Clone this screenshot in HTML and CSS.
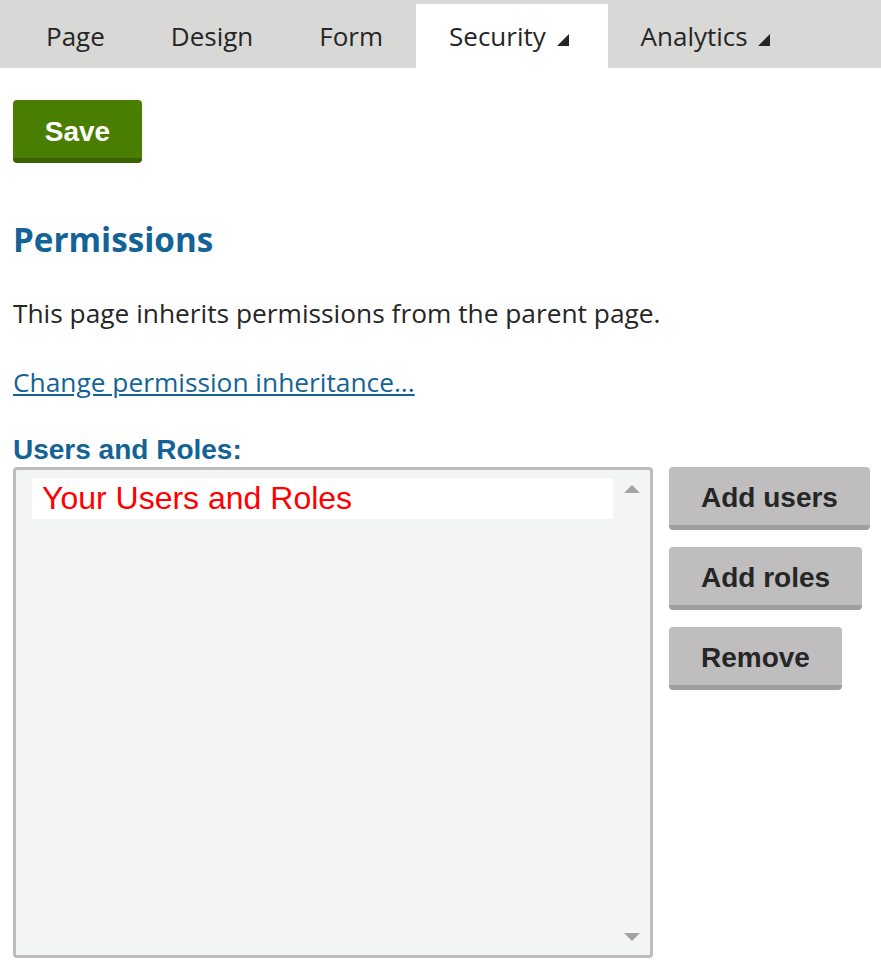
FILE: index.html
```html
<!DOCTYPE html>
<html>
<head>
<meta charset="utf-8">
<link rel="stylesheet" href="styles.css">
</head>
<body>
<nav class="tabs">
  <div class="tab">Page</div>
  <div class="tab">Design</div>
  <div class="tab">Form</div>
  <div class="tab active">Security <span class="caret"></span></div>
  <div class="tab">Analytics <span class="caret"></span></div>
</nav>
<main class="content">
  <button class="btn-save">Save</button>
  <h2 class="heading">Permissions</h2>
  <p class="info">This page inherits permissions from the parent page.</p>
  <a class="link" href="#">Change permission inheritance...</a>
  <div class="label">Users and Roles:</div>
  <div class="users-row">
    <div class="listbox">
      <div class="list-items">
        <div class="list-item">Your Users and Roles</div>
      </div>
      <div class="scroll">
        <span class="arrow up"></span>
        <span class="arrow down"></span>
      </div>
    </div>
    <div class="actions">
      <button class="btn-gray">Add users</button>
      <button class="btn-gray">Add roles</button>
      <button class="btn-gray">Remove</button>
    </div>
  </div>
</main>
</body>
</html>
```

FILE: styles.css
```css
* { box-sizing: border-box; }
body {
  margin: 0;
  font-family: "Open Sans", sans-serif;
  color: #262626;
  background: #fff;
}
.tabs {
  display: flex;
  height: 68px;
  background: #d8d9d6;
  padding: 4px 0 0 13px;
}
.tab {
  display: flex;
  align-items: center;
  padding: 0 33px;
  font-size: 26px;
  color: #262626;
  height: 64px;
  white-space: pre;
}
.tab.active {
  background: #fff;
}
.caret {
  display: inline-block;
  width: 0;
  height: 0;
  border-left: 12px solid transparent;
  border-bottom: 12px solid #262626;
  margin-left: 4px;
  margin-right: 6px;
  margin-top: 8px;
}
.content {
  padding: 32px 13px 0 13px;
}
.btn-save {
  display: block;
  width: 129px;
  height: 63px;
  background: #4a7e00;
  border: none;
  border-bottom: 5px solid #3a6300;
  border-radius: 4px;
  color: #fff;
  font-family: "Liberation Sans", Arial, sans-serif;
  font-weight: bold;
  font-size: 28px;
  padding: 5px 0 0;
}
.heading {
  margin: 57px 0 0 0;
  font-size: 33.2px;
  font-weight: bold;
  color: #146396;
  line-height: 40px;
}
.info {
  margin: 35px 0 0 0;
  font-size: 26.3px;
  line-height: 36px;
}
.link {
  display: inline-block;
  margin-top: 33px;
  font-size: 26.3px;
  line-height: 36px;
  color: #146396;
}
.label {
  margin-top: 34px;
  font-family: "Liberation Sans", Arial, sans-serif;
  font-weight: bold;
  font-size: 28px;
  color: #146396;
  line-height: 32px;
}
.users-row {
  display: flex;
  gap: 16px;
  margin-top: 1px;
}
.listbox {
  width: 640px;
  height: 491px;
  flex-shrink: 0;
  border: 3px solid #bdbcbc;
  border-radius: 4px;
  background: #f3f5f4;
  display: flex;
  padding: 8px 0 8px 16px;
}
.list-items { flex: 1; }
.list-item {
  background: #fff;
  height: 41px;
  padding-left: 10px;
  font-family: "Liberation Sans", Arial, sans-serif;
  font-size: 32px;
  color: #ff0000;
  line-height: 41px;
}
.scroll {
  width: 37px;
  display: flex;
  flex-direction: column;
  justify-content: space-between;
  align-items: center;
  padding: 7px 0 6px;
}
.arrow {
  width: 0;
  height: 0;
  border-left: 8px solid transparent;
  border-right: 8px solid transparent;
}
.arrow.up { border-bottom: 8px solid #a3a3a3; }
.arrow.down { border-top: 8px solid #a3a3a3; }
.actions {
  display: flex;
  flex-direction: column;
  align-items: flex-start;
  gap: 17px;
}
.btn-gray {
  height: 63px;
  padding: 3px 32px 0;
  background: #bfbdbe;
  border: none;
  border-bottom: 5px solid #a09fa0;
  border-radius: 4px;
  font-family: "Liberation Sans", Arial, sans-serif;
  font-weight: bold;
  font-size: 28px;
  color: #262626;
  white-space: nowrap;
}
```
